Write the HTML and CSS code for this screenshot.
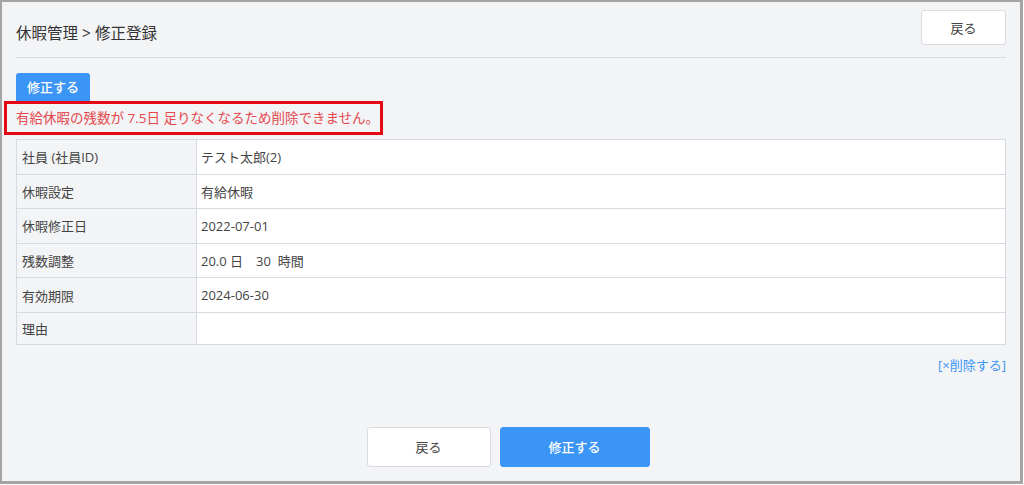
FILE: index.html
```html
<!DOCTYPE html>
<html lang="ja">
<head>
<meta charset="utf-8">
<link rel="stylesheet" href="styles.css">
</head>
<body>
<div class="frame">
  <div class="header">
    <div class="crumb">休暇管理 &gt; 修正登録</div>
    <button class="btn btn-white btn-top">戻る</button>
  </div>
  <div class="tab-row"><span class="tab">修正する</span></div>
  <div class="error">有給休暇の残数が 7.5日 足りなくなるため削除できません。</div>
  <table class="info">
    <tr><th>社員 (社員ID)</th><td>テスト太郎(2)</td></tr>
    <tr><th>休暇設定</th><td>有給休暇</td></tr>
    <tr><th>休暇修正日</th><td>2022-07-01</td></tr>
    <tr><th>残数調整</th><td>20.0 日　30&nbsp; 時間</td></tr>
    <tr><th>有効期限</th><td>2024-06-30</td></tr>
    <tr><th>理由</th><td></td></tr>
  </table>
  <div class="del-row"><a class="del">[×削除する]</a></div>
  <div class="actions">
    <button class="btn btn-white btn-back">戻る</button>
    <button class="btn btn-blue btn-submit">修正する</button>
  </div>
</div>
</body>
</html>
```

FILE: styles.css
```css
* { box-sizing: border-box; }
html, body {
  margin: 0;
  padding: 0;
  width: 1024px;
  height: 485px;
  overflow: hidden;
  background: #ffffff;
}
body {
  font-family: "Open Sans", "Noto Sans CJK JP", sans-serif;
  color: #333;
}
.frame {
  width: 1023px;
  height: 484px;
  border: 2px solid #a4a4a4;
  border-right-width: 3px;
  border-bottom-width: 3px;
  background: #f3f4f6;
  padding: 0 14px 0 14px;
  display: flex;
  flex-direction: column;
}
.header {
  display: flex;
  align-items: center;
  justify-content: space-between;
  height: 56px;
  padding-top: 6px;
  border-bottom: 1px solid #d9dbe0;
}
.crumb {
  font-size: 15.5px;
  color: #333;
}
.btn {
  font-family: inherit;
  border-radius: 3px;
  cursor: pointer;
}
.btn-white {
  background: #fff;
  border: 1px solid #d9dbe0;
  color: #444;
}
.btn-blue {
  background: #3b95f7;
  border: 1px solid #3b95f7;
  color: #fff;
}
.btn-top {
  width: 85px;
  height: 35px;
  font-size: 13px;
  margin-top: -10px;
}
.tab-row {
  margin-top: 15px;
  height: 28px;
  display: flex;
}
.tab {
  background: #3b95f7;
  color: #fff;
  font-size: 13px;
  font-weight: 500;
  padding: 4px 11px 0;
  border-radius: 3px 3px 0 0;
  height: 28px;
}
.error {
  margin: 0 0 0 -12px;
  width: 379px;
  height: 34px;
  border: 3px solid #e50914;
  color: #e5484d;
  font-size: 13.5px;
  padding: 3px 0 0 9px;
  white-space: nowrap;
}
.info {
  margin-top: 4px;
  width: 990px;
  border-collapse: collapse;
  font-size: 13px;
}
.info th, .info td {
  border: 1px solid #d6dae2;
  height: 34.6px;
  padding: 0 0 0 5px;
  text-align: left;
  font-weight: normal;
  color: #444;
}
.info th {
  width: 180px;
  background: #f3f4f6;
}
.info td {
  background: #fff;
  padding-left: 4px;
}
.info tr:last-child th, .info tr:last-child td { height: 32px; }
.del-row {
  display: flex;
  justify-content: flex-end;
  margin-top: 10px;
  width: 990px;
}
.del {
  color: #3b95f7;
  font-size: 13px;
}
.actions {
  display: flex;
  justify-content: center;
  gap: 9px;
  margin-top: 53px;
  width: 990px;
  padding-right: 6px;
}
.btn-back {
  width: 124px;
  height: 40px;
  font-size: 13px;
}
.btn-submit {
  width: 150px;
  height: 40px;
  font-size: 13px;
  font-weight: 500;
}
```
